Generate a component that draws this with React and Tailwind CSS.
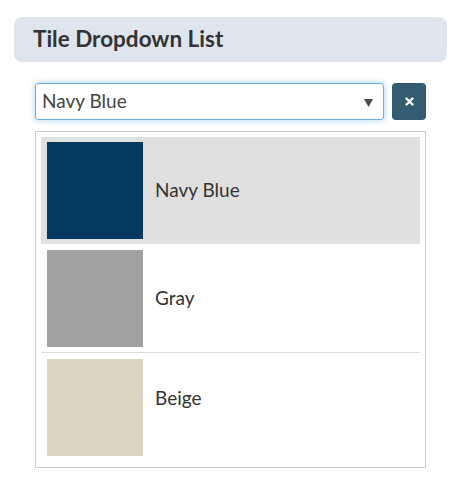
import { useState } from "react";

const tiles = [
  { name: "Navy Blue", color: "bg-[#043a5f]" },
  { name: "Gray", color: "bg-[#a1a1a0]" },
  { name: "Beige", color: "bg-[#dcd3c2]" },
];

export default function App() {
  const [selected, setSelected] = useState("Navy Blue");

  return (
    <div className="w-[463px] h-[486px] bg-white font-['Lato','Liberation_Sans',sans-serif] text-[#333]">
      <div className="pt-[17px] px-[14px]">
        <div className="w-[433px] h-[45px] rounded-lg bg-[#dfe5ef] flex items-center pl-[19px]">
          <h1 className="text-[22.5px] font-bold text-[#333] leading-none">Tile Dropdown List</h1>
        </div>
      </div>

      <div className="ml-[35px] mt-[21px] w-[391px]">
        <div className="flex gap-[8px]">
          <div className="w-[349px] h-[37px] border border-[#66afe9] rounded-[3px] shadow-[0_0_6px_rgba(102,175,233,0.6)] flex items-center justify-between pl-[6px] pr-[10px]">
            <span className="text-[19px] text-[#444]">{selected}</span>
            <svg width="9" height="8" viewBox="0 0 9 8" className="mt-[2px]">
              <path d="M0 0 H9 L4.5 8 Z" fill="#4a4a4a" />
            </svg>
          </div>
          <button
            type="button"
            className="w-[34px] h-[37px] rounded-[4px] bg-[#335c73] text-white flex items-center justify-center"
          >
            <svg width="9" height="9" viewBox="0 0 9 9">
              <path d="M1.5 1.5 L7.5 7.5 M7.5 1.5 L1.5 7.5" stroke="white" strokeWidth="2.4" strokeLinecap="round" />
            </svg>
          </button>
        </div>

        <div className="mt-[11px] border border-[#cccccc] p-[5px] pb-[6px]">
          {tiles.map((t, i) => (
            <div
              key={t.name}
              onClick={() => setSelected(t.name)}
              className={
                "flex items-center gap-[12px] px-[6px] py-[5px] cursor-pointer " +
                (t.name === selected ? "bg-[#e0e0e0] " : "") +
                (i === 1 ? "border-b border-[#dddddd] pt-[6px]" : "") +
                (i === 2 ? "pt-[6px]" : "")
              }
            >
              <div className={"w-[96px] h-[97px] " + t.color} />
              <span className={"text-[19px] text-[#333] " + (i === 2 ? "mb-[18px]" : "")}>{t.name}</span>
            </div>
          ))}
        </div>
      </div>
    </div>
  );
}
